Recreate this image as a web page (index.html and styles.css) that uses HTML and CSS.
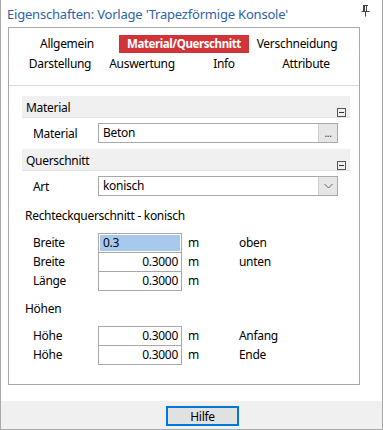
FILE: index.html
```html
<!DOCTYPE html>
<html lang="de">
<head>
    <meta charset="UTF-8">
    <title>Eigenschaften</title>
    <link rel="stylesheet" href="styles.css">
</head>
<body>
    <div class="window">
        <!-- Title bar -->
        <div class="titlebar">
            <span class="title">Eigenschaften: Vorlage 'Trapezförmige Konsole'</span>
            <svg class="pin" width="9" height="12" viewBox="0 0 9 12">
                <path d="M2 0.5H7M2.5 0.5V6.5M5.5 0.5V6.5M3.5 0.5V6.5M0.5 6.5H8.5M4.5 6.5V11.5" stroke="#444" stroke-width="1" fill="none"/>
            </svg>
        </div>

        <!-- Main panel -->
        <div class="panel">
            <div class="tabs">
                <div class="tab-row row-top">
                    <span class="tab tab-allg">Allgemein</span>
                    <span class="tab tab-active">Material/Querschnitt</span>
                    <span class="tab tab-versch">Verschneidung</span>
                </div>
                <div class="tab-row row-bottom">
                    <span class="tab">Darstellung</span>
                    <span class="tab">Auswertung</span>
                    <span class="tab">Info</span>
                    <span class="tab">Attribute</span>
                </div>
            </div>

            <div class="content">
                <div class="group-head">
                    <span>Material</span>
                    <span class="collapse"></span>
                </div>
                <div class="field-row">
                    <span class="label">Material</span>
                    <div class="combo">
                        <span class="combo-text">Beton</span>
                        <span class="combo-btn">...</span>
                    </div>
                </div>

                <div class="group-head">
                    <span>Querschnitt</span>
                    <span class="collapse"></span>
                </div>
                <div class="field-row">
                    <span class="label">Art</span>
                    <div class="combo">
                        <span class="combo-text">konisch</span>
                        <span class="combo-btn">
                            <svg width="9" height="6" viewBox="0 0 9 6"><path d="M0.5 1L4.5 5L8.5 1" stroke="#666" fill="none"/></svg>
                        </span>
                    </div>
                </div>

                <div class="sub-head">Rechteckquerschnitt - konisch</div>
                <div class="value-list">
                    <div class="value-row">
                        <span class="label">Breite</span>
                        <span class="num num-edit">0.3</span>
                        <span class="unit">m</span>
                        <span class="note">oben</span>
                    </div>
                    <div class="value-row">
                        <span class="label">Breite</span>
                        <span class="num">0.3000</span>
                        <span class="unit">m</span>
                        <span class="note">unten</span>
                    </div>
                    <div class="value-row">
                        <span class="label">Länge</span>
                        <span class="num">0.3000</span>
                        <span class="unit">m</span>
                        <span class="note"></span>
                    </div>
                </div>

                <div class="sub-head sub-heights">Höhen</div>
                <div class="value-list">
                    <div class="value-row">
                        <span class="label">Höhe</span>
                        <span class="num">0.3000</span>
                        <span class="unit">m</span>
                        <span class="note">Anfang</span>
                    </div>
                    <div class="value-row">
                        <span class="label">Höhe</span>
                        <span class="num">0.3000</span>
                        <span class="unit">m</span>
                        <span class="note">Ende</span>
                    </div>
                </div>
            </div>
        </div>

        <!-- Footer with help button -->
        <div class="footer">
            <button class="btn-help">Hilfe</button>
        </div>
    </div>
</body>
</html>
```

FILE: styles.css
```css
/* Base */
body {
    margin: 0;
    font-family: 'Noto Sans', 'Open Sans', sans-serif;
    font-size: 12px;
    letter-spacing: -0.3px;
    color: #000;
    background: #fff;
}

.window {
    width: 383px;
    height: 430px;
    box-sizing: border-box;
    border: 1px solid #a9a9a9;
    border-top: none;
    background: #fff;
    display: flex;
    flex-direction: column;
}

/* Title bar */
.titlebar {
    height: 27px;
    display: flex;
    align-items: center;
    justify-content: space-between;
    padding: 0 12px 0 6px;
}

.title {
    font-size: 13px;
    color: #2e63a8;
    letter-spacing: -0.2px;
}

.pin {
    margin-top: -6px;
}

/* Panel */
.panel {
    height: 358px;
    box-sizing: border-box;
    margin: 0 22px 0 7px;
    border: 1px solid #a9a9a9;
}

/* Tabs */
.tabs {
    padding: 7px 0 12px;
    border-bottom: 1px solid #dcdcdc;
}

.tab-row {
    display: flex;
    height: 18px;
    line-height: 18px;
}

.row-top {
    padding-left: 13px;
}

.row-bottom {
    margin-top: 2px;
    padding-left: 10px;
}

.tab {
    text-align: center;
    white-space: nowrap;
}

.row-bottom .tab {
    width: 82px;
}

.tab-allg {
    width: 90px;
    margin-right: 7px;
}

.tab-active {
    width: 130px;
    background: #d13438;
    color: #fff;
    font-weight: bold;
    font-size: 11.5px;
    letter-spacing: -0.4px;
}

.tab-versch {
    width: 96px;
}

/* Content */
.content {
    padding: 10px 9px 0 13px;
}

.group-head {
    height: 22px;
    background: #f0f0f0;
    border-bottom: 1px solid #e3e3e3;
    box-sizing: border-box;
    display: flex;
    justify-content: space-between;
    padding: 3px 4px 0 4px;
}

.group-head + .field-row {
    margin-bottom: 2px;
}

.collapse {
    width: 7px;
    height: 7px;
    border: 1px solid #555;
    margin-top: 9px;
    position: relative;
}

.collapse::after {
    content: "";
    position: absolute;
    left: 1px;
    right: 1px;
    top: 3px;
    height: 1px;
    background: #333;
}

.field-row {
    display: flex;
    align-items: center;
    padding: 5px 12px 4px 11px;
}

.label {
    width: 65px;
    flex-shrink: 0;
}

.combo {
    flex: 1;
    height: 20px;
    box-sizing: border-box;
    border: 1px solid #a9a9a9;
    display: flex;
}

.combo-text {
    flex: 1;
    padding-left: 4px;
    line-height: 18px;
}

.combo-btn {
    width: 18px;
    background: #e6e6e6;
    border-left: 1px solid #cfcfcf;
    display: flex;
    align-items: center;
    justify-content: center;
    font-size: 10px;
    line-height: 18px;
    color: #333;
}

/* Value lists */
.sub-head {
    margin-top: 7px;
    padding-left: 3px;
    line-height: 18px;
}

.sub-heights {
    margin-top: 10px;
}

.value-list {
    margin-top: 8px;
}

.value-row {
    display: flex;
    align-items: center;
    padding-left: 11px;
    height: 19px;
}

.num {
    width: 84px;
    height: 20px;
    box-sizing: border-box;
    border: 1px solid #a9a9a9;
    margin-top: 1px;
    text-align: right;
    padding-right: 3px;
    line-height: 18px;
}

.num-edit {
    text-align: left;
    padding-left: 4px;
    background: #a8c9ee;
    box-shadow: inset 0 0 0 1px #fff;
}

.unit {
    width: 51px;
    padding-left: 6px;
}

/* Footer */
.footer {
    margin-top: auto;
    height: 28px;
    background: #f0f0f0;
    padding: 5px 0 0 165px;
    box-sizing: border-box;
}

.btn-help {
    width: 73px;
    height: 20px;
    border: 2px solid #0078d7;
    background: #e1e1e1;
    font-family: inherit;
    font-size: 12px;
    letter-spacing: -0.3px;
    padding: 0;
}
```
